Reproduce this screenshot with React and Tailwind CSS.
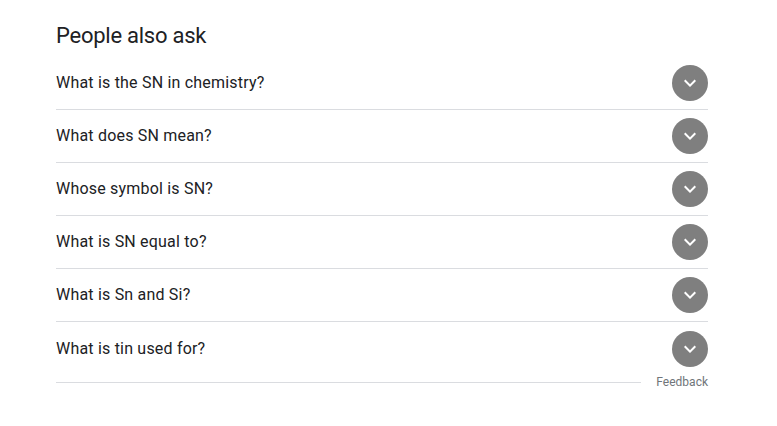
import React from "react";

const questions = [
  "What is the SN in chemistry?",
  "What does SN mean?",
  "Whose symbol is SN?",
  "What is SN equal to?",
  "What is Sn and Si?",
  "What is tin used for?",
];

function Chevron() {
  return (
    <svg width="24" height="24" viewBox="0 0 24 24" fill="none">
      <path d="M7.41 8.59 12 13.17l4.59-4.58L18 10l-6 6-6-6 1.41-1.41z" fill="#ffffff" />
    </svg>
  );
}

export default function App() {
  return (
    <div className="w-[777px] h-[426px] bg-white" style={{ fontFamily: "Roboto, Arial, sans-serif" }}>
      <div className="ml-[56px] w-[652px] pt-[22px]">
        <h2 className="text-[22px] leading-[28px] tracking-[-0.25px] text-[#202124] font-normal mb-[7px]">People also ask</h2>
        <div>
          {questions.map((q, i) => (
            <div
              key={q}
              className={`flex items-center justify-between h-[53px] ${i < questions.length - 1 ? "border-b border-[#dadce0]" : ""}`}
            >
              <span className="text-[16px] leading-[24px] tracking-[0.2px] text-[#202124]">{q}</span>
              <div className="w-[36px] h-[36px] rounded-full bg-[#7f7f7f] flex items-center justify-center">
                <Chevron />
              </div>
            </div>
          ))}
        </div>
        <div className="flex items-center -mt-px">
          <div className="flex-1 h-px bg-[#dadce0]" />
          <span className="ml-[15px] text-[12px] leading-[16px] text-[#70757a]">Feedback</span>
        </div>
      </div>
    </div>
  );
}
